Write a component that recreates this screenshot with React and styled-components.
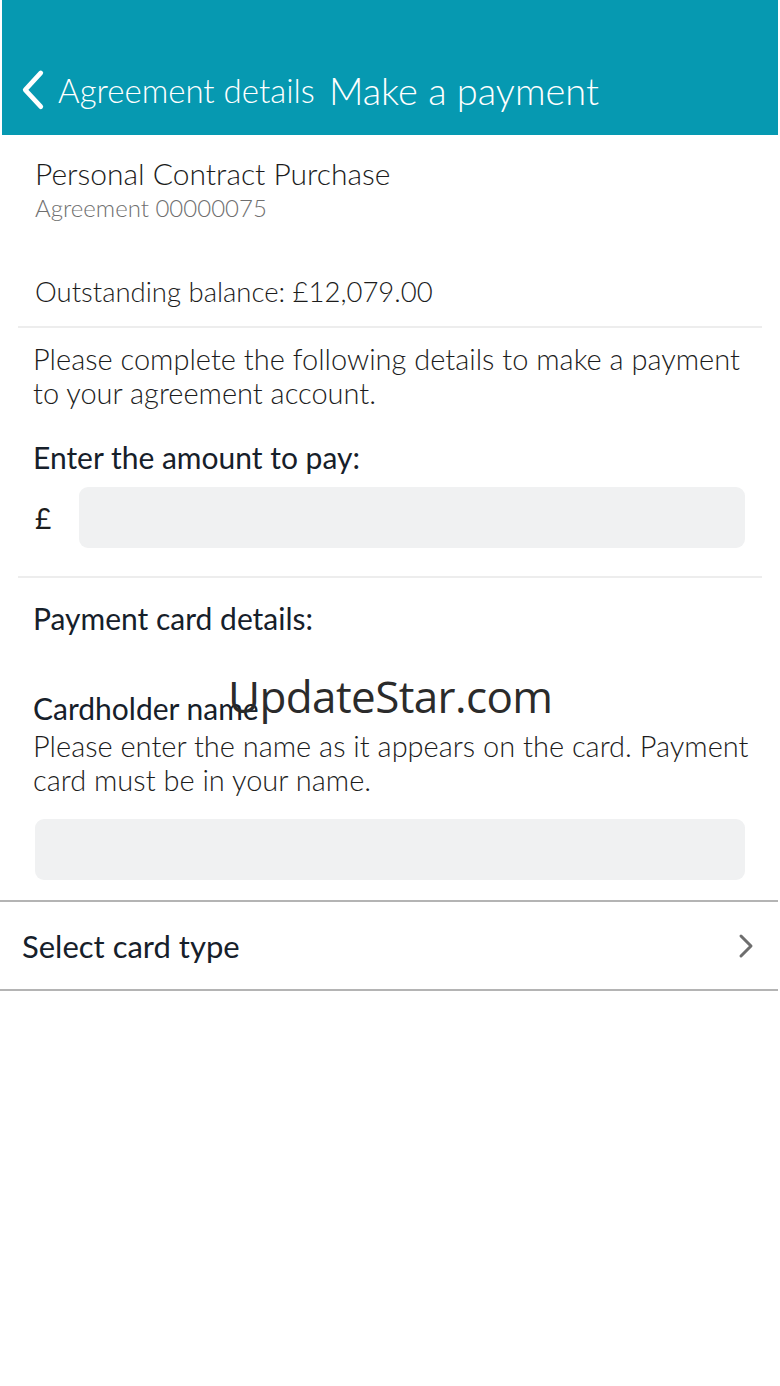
import styled, { createGlobalStyle } from 'styled-components';

const GlobalStyle = createGlobalStyle`
    html, body {
        margin: 0;
        padding: 0;
        background: #ffffff;
    }
    body {
        font-family: Lato, "Open Sans", sans-serif;
        color: #1c1c1c;
    }
`;

const Page = styled.div`
    position: relative;
    width: 780px;
    min-height: 1386px;
    background: #ffffff;
`;

const Header = styled.header`
    display: flex;
    align-items: flex-end;
    height: 135px;
    margin: 0 2px;
    padding: 0 0 24px 18px;
    box-sizing: border-box;
    background-color: #0699b1;
    color: #ffffff;
`;

const Back = styled.div`
    display: flex;
    align-items: center;
    gap: 12px;
    margin-right: 14px;
    font-size: 33px;
    font-weight: 300;
`;

const Title = styled.h1`
    margin: 0;
    font-size: 38px;
    font-weight: 300;
    line-height: 1;
    padding-bottom: 2px;
`;

const Summary = styled.section`
    padding: 20px 35px 0;
`;

const ProductName = styled.div`
    font-size: 30px;
    font-weight: 300;
    line-height: 36px;
`;

const AgreementNo = styled.div`
    margin-top: 3px;
    font-size: 24px;
    font-weight: 300;
    color: #6f6f6f;
    line-height: 28px;
`;

const Balance = styled.div`
    margin-top: 53px;
    font-size: 27.5px;
    font-weight: 300;
    line-height: 34px;
`;

const Divider = styled.hr`
    border: none;
    height: 2px;
    background: ${({ strong }) => (strong ? '#b4b4b4' : '#ededed')};
    margin: ${({ strong }) => (strong ? '0' : '0 18px')};
    width: ${({ strong }) => (strong ? '778px' : 'auto')};
`;

const Form = styled.section`
    padding: ${({ pad }) => pad || '0 33px'};
`;

const Text = styled.p`
    margin: ${({ top }) => top || 0}px -12px 0 0;
    font-size: 29px;
    font-weight: 300;
    line-height: 34px;
`;

const Label = styled.div`
    font-size: 30px;
    font-weight: 400;
    line-height: 34px;
    color: #16202a;
    margin-top: ${({ top }) => top || 0}px;
`;

const AmountRow = styled.div`
    display: flex;
    align-items: center;
    gap: 28px;
    margin-top: ${({ top }) => top || 13}px;
    padding: 0 2px;
    font-size: 28px;
`;

const Input = styled.div`
    flex: 1;
    height: 61px;
    border-radius: 9px;
    background: #f0f1f2;
`;

const SelectRow = styled.div`
    display: flex;
    align-items: center;
    justify-content: space-between;
    height: 87px;
    padding: 0 24px 0 22px;
    width: 778px;
    box-sizing: border-box;
    font-size: 31px;
    font-weight: 400;
    color: #16202a;
`;

const Watermark = styled.div`
    position: absolute;
    left: 228px;
    top: 666px;
    font-family: "Open Sans", sans-serif;
    font-size: 44px;
    color: #2b2b2b;
    letter-spacing: -0.6px;
`;

const Chevron = ({ color, size, width }) => (
    <svg width={size} height={size * 1.6} viewBox="0 0 10 16" fill="none">
        <path d="M8 1.5 L2 8 L8 14.5" stroke={color} strokeWidth={width} strokeLinecap="round" strokeLinejoin="round" />
    </svg>
);

export default function App() {
    return (
        <Page>
            <GlobalStyle />
            <Header>
                <Back>
                    <Chevron color="#ffffff" size={26} width={1.8} />
                    Agreement details
                </Back>
                <Title>Make a payment</Title>
            </Header>

            <Summary>
                <ProductName>Personal Contract Purchase</ProductName>
                <AgreementNo>Agreement 00000075</AgreementNo>
                <Balance>Outstanding balance: £12,079.00</Balance>
            </Summary>

            <Divider style={{ marginTop: 17 }} />

            <Form pad="14px 33px 28px">
                <Text>Please complete the following details to make a payment to your agreement account.</Text>
                <Label top={30}>Enter the amount to pay:</Label>
                <AmountRow>
                    £
                    <Input />
                </AmountRow>
            </Form>

            <Divider />

            <Form pad="23px 33px 20px">
                <Label>Payment card details:</Label>
                <Label top={56}>Cardholder name</Label>
                <Text top={4}>Please enter the name as it appears on the card. Payment card must be in your name.</Text>
                <AmountRow top={22}>
                    <Input />
                </AmountRow>
            </Form>

            <Divider strong />
            <SelectRow>
                Select card type
                <svg width="16" height="26" viewBox="0 0 16 26" fill="none">
                    <path d="M3 3 L13 13 L3 23" stroke="#6e6e6e" strokeWidth="3" strokeLinecap="round" strokeLinejoin="round" />
                </svg>
            </SelectRow>
            <Divider strong />

            <Watermark>UpdateStar.com</Watermark>
        </Page>
    );
}
